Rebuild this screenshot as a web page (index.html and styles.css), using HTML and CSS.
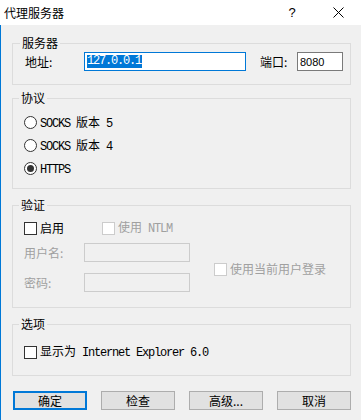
FILE: index.html
```html
<!DOCTYPE html>
<html lang="zh-CN">
<head>
<meta charset="utf-8">
<title>代理服务器</title>
<link rel="stylesheet" href="styles.css">
</head>
<body>
<div class="window">
  <div class="titlebar">
    <span class="title">代理服务器</span>
    <span class="cap-btn help">?</span>
    <span class="cap-btn close">
      <svg width="11" height="11" viewBox="0 0 11 11"><path d="M0.5 0.5L10.5 10.5M10.5 0.5L0.5 10.5" stroke="#000" stroke-width="1" fill="none"/></svg>
    </span>
  </div>
  <div class="content">
    <fieldset class="group g-server">
      <legend>服务器</legend>
      <div class="row">
        <span class="lbl lbl-addr">地址:</span>
        <div class="input addr"><span class="sel mono">127.0.0.1</span></div>
        <span class="lbl lbl-port">端口:</span>
        <div class="input port">8080</div>
      </div>
    </fieldset>

    <fieldset class="group g-proto">
      <legend>协议</legend>
      <div class="radio-row"><span class="radio"></span><span class="opt"><span class="mono">SOCKS </span>版本<span class="mono"> 5</span></span></div>
      <div class="radio-row"><span class="radio"></span><span class="opt"><span class="mono">SOCKS </span>版本<span class="mono"> 4</span></span></div>
      <div class="radio-row"><span class="radio checked"></span><span class="opt"><span class="mono">HTTPS</span></span></div>
    </fieldset>

    <fieldset class="group g-auth">
      <legend>验证</legend>
      <div class="check-line">
        <div class="check-item first"><span class="box"></span><span class="opt">启用</span></div>
        <div class="check-item disabled"><span class="box"></span><span class="opt">使用<span class="mono"> NTLM</span></span></div>
      </div>
      <div class="cred">
        <div class="cred-fields">
          <div class="field-row"><span class="lbl dim">用户名:</span><div class="input dis"></div></div>
          <div class="field-row"><span class="lbl dim">密码:</span><div class="input dis"></div></div>
        </div>
        <div class="check-item disabled cur-user"><span class="box"></span><span class="opt">使用当前用户登录</span></div>
      </div>
    </fieldset>

    <fieldset class="group g-opts">
      <legend>选项</legend>
      <div class="check-item"><span class="box"></span><span class="opt">显示为<span class="mono"> Internet Explorer 6.0</span></span></div>
    </fieldset>

    <div class="buttons">
      <div class="btn default">确定</div>
      <div class="btn">检查</div>
      <div class="btn">高级...</div>
      <div class="btn">取消</div>
    </div>
  </div>
</div>
</body>
</html>
```

FILE: styles.css
```css
* { box-sizing: border-box; }
html, body { margin: 0; padding: 0; }
body {
  width: 361px;
  height: 420px;
  overflow: hidden;
  background: #f0f0f0;
  font-family: "Noto Sans CJK SC", "Microsoft YaHei", sans-serif;
  font-size: 12px;
  color: #000;
}
.window {
  width: 361px;
  height: 420px;
  display: flex;
  flex-direction: column;
}
.titlebar {
  height: 25px;
  background: #fff;
  display: flex;
  align-items: center;
  flex: none;
}
.title {
  flex: 1;
  padding-left: 4px;
  font-size: 12px;
  line-height: 14px;
}
.cap-btn {
  width: 46px;
  height: 25px;
  display: flex;
  align-items: center;
  justify-content: center;
}
.help {
  font-family: "Liberation Sans", sans-serif;
  font-size: 13px;
}
.close svg { display: block; margin-left: 1px; }
.content {
  flex: 1;
  border-left: 1px solid #0078d7;
  padding: 11px 10px 0 11px;
}
.mono {
  font-family: "Liberation Mono", monospace;
  font-size: 12px;
  letter-spacing: -1.2px;
}
.group {
  margin: 0;
  border: 1px solid #dcdcdc;
  min-width: 0;
}
.group legend {
  padding: 0 2px;
  margin-left: -5px;
  line-height: 14px;
  height: 14px;
  font-size: 12px;
}
.g-server { padding: 2px 7px 13px 12px; }
.g-proto { margin-top: 6px; padding: 6px 7px 8px 11px; }
.g-auth { margin-top: 9px; padding: 9px 7px 15px 11px; }
.g-opts { margin-top: 9px; padding: 14px 7px 16px 11px; }
.row {
  display: flex;
  align-items: center;
  height: 19px;
}
.lbl { line-height: 14px; }
.lbl-addr { width: 59px; }
.lbl-port { width: 37px; margin-left: 14px; }
.input {
  height: 19px;
  border: 1px solid #7a7a7a;
  background: #fff;
  display: flex;
  align-items: center;
  padding-left: 2px;
}
.addr {
  width: 162px;
  border-color: #0078d7;
}
.sel {
  background: #0078d7;
  color: #fff;
  line-height: 13px;
  padding: 0 1px 0 0;
}
.port {
  width: 46px;
  font-family: "Liberation Sans", sans-serif;
  font-size: 11px;
  padding-left: 2px;
}
.radio-row {
  height: 23px;
  display: flex;
  align-items: center;
}
.radio {
  width: 13px;
  height: 13px;
  border-radius: 50%;
  border: 1px solid #333;
  background: #fff;
  margin-right: 3px;
  display: flex;
  align-items: center;
  justify-content: center;
  flex: none;
}
.radio.checked::after {
  content: "";
  width: 7px;
  height: 7px;
  border-radius: 50%;
  background: #333;
}
.opt { line-height: 14px; white-space: nowrap; }
.check-line {
  display: flex;
  height: 14px;
  align-items: center;
}
.check-item {
  display: flex;
  align-items: center;
  height: 14px;
}
.check-item.first { width: 78px; }
.box {
  width: 13px;
  height: 13px;
  border: 1px solid #333;
  background: #fff;
  margin-right: 3px;
  flex: none;
}
.disabled { color: #a0a0a0; }
.disabled .box { border-color: #cccccc; }
.dim { color: #a0a0a0; }
.cred {
  margin-top: 8px;
  display: flex;
  align-items: center;
}
.cred-fields {
  display: flex;
  flex-direction: column;
  gap: 11px;
}
.field-row {
  display: flex;
  align-items: center;
}
.field-row .lbl { width: 60px; }
.input.dis {
  width: 106px;
  border-color: #cccccc;
  background: #f0f0f0;
}
.cur-user { margin-left: 24px; margin-top: 3px; }
.buttons {
  margin-top: 15px;
  padding-left: 1px;
  display: flex;
  justify-content: space-between;
}
.btn {
  width: 74px;
  height: 19px;
  border: 1px solid #adadad;
  background: #e1e1e1;
  display: flex;
  align-items: center;
  justify-content: center;
  line-height: 14px;
}
.btn.default { border: 2px solid #0078d7; }
```
